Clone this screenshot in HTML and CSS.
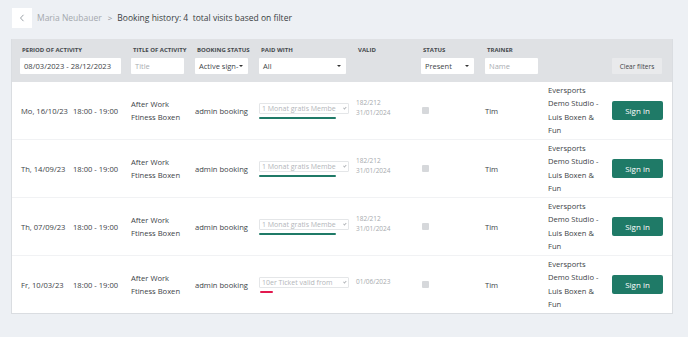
FILE: index.html
```html
<!DOCTYPE html>
<html lang="en">
<head>
    <meta charset="UTF-8">
    <title>Booking history</title>
    <link rel="stylesheet" href="styles.css">
</head>
<body>

    <div class="topbar">
        <a class="back-button" href="#">
            <svg width="6" height="8" viewBox="0 0 6 8"><path d="M4.5 0.8 L1.5 4 L4.5 7.2" fill="none" stroke="#9aa0a6" stroke-width="1"/></svg>
        </a>
        <span class="crumb">Maria Neubauer</span>
        <span class="crumb-sep">&gt;</span>
        <span class="crumb-current">Booking history: 4&nbsp; total visits based on filter</span>
    </div>

    <div class="history-card">
        <div class="filter-row">
            <div class="filter">
                <label>Period of activity</label>
                <div class="field field-period">08/03/2023 - 28/12/2023</div>
            </div>
            <div class="filter">
                <label>Title of activity</label>
                <div class="field placeholder">Title</div>
            </div>
            <div class="filter">
                <label>Booking status</label>
                <div class="field dropdown">Active sign-<span class="caret"></span></div>
            </div>
            <div class="filter">
                <label>Paid with</label>
                <div class="field dropdown">All<span class="caret"></span></div>
            </div>
            <div class="filter">
                <label>Valid</label>
            </div>
            <div class="filter">
                <label>Status</label>
                <div class="field dropdown">Present<span class="caret"></span></div>
            </div>
            <div class="filter">
                <label>Trainer</label>
                <div class="field placeholder">Name</div>
            </div>
            <div class="filter"></div>
            <div class="filter filter-action">
                <button type="button" class="clear-button">Clear filters</button>
            </div>
        </div>

        <div class="visit-row">
            <div class="when"><span class="day">Mo, 16/10/23</span><span>18:00 - 19:00</span></div>
            <div class="title">After Work<br>Ftiness Boxen</div>
            <div>admin booking</div>
            <div class="paid"><div class="paid-select">1 Monat gratis Membe<span class="chev"></span></div><div class="paid-bar bar-green"></div></div>
            <div class="valid">182/212<br>31/01/2024</div>
            <div><span class="check"></span></div>
            <div>Tim</div>
            <div class="studio">Eversports<br>Demo Studio -<br>Luis Boxen &amp;<br>Fun</div>
            <div><button type="button" class="signin-button">Sign in</button></div>
        </div>

        <div class="visit-row">
            <div class="when"><span class="day">Th, 14/09/23</span><span>18:00 - 19:00</span></div>
            <div class="title">After Work<br>Ftiness Boxen</div>
            <div>admin booking</div>
            <div class="paid"><div class="paid-select">1 Monat gratis Membe<span class="chev"></span></div><div class="paid-bar bar-green"></div></div>
            <div class="valid">182/212<br>31/01/2024</div>
            <div><span class="check"></span></div>
            <div>Tim</div>
            <div class="studio">Eversports<br>Demo Studio -<br>Luis Boxen &amp;<br>Fun</div>
            <div><button type="button" class="signin-button">Sign in</button></div>
        </div>

        <div class="visit-row">
            <div class="when"><span class="day">Th, 07/09/23</span><span>18:00 - 19:00</span></div>
            <div class="title">After Work<br>Ftiness Boxen</div>
            <div>admin booking</div>
            <div class="paid"><div class="paid-select">1 Monat gratis Membe<span class="chev"></span></div><div class="paid-bar bar-green"></div></div>
            <div class="valid">182/212<br>31/01/2024</div>
            <div><span class="check"></span></div>
            <div>Tim</div>
            <div class="studio">Eversports<br>Demo Studio -<br>Luis Boxen &amp;<br>Fun</div>
            <div><button type="button" class="signin-button">Sign in</button></div>
        </div>

        <div class="visit-row">
            <div class="when"><span class="day">Fr, 10/03/23</span><span>18:00 - 19:00</span></div>
            <div class="title">After Work<br>Ftiness Boxen</div>
            <div>admin booking</div>
            <div class="paid"><div class="paid-select">10er Ticket valid from<span class="chev"></span></div><div class="paid-bar bar-red"></div></div>
            <div class="valid">01/06/2023</div>
            <div><span class="check"></span></div>
            <div>Tim</div>
            <div class="studio">Eversports<br>Demo Studio -<br>Luis Boxen &amp;<br>Fun</div>
            <div><button type="button" class="signin-button">Sign in</button></div>
        </div>
    </div>

</body>
</html>
```

FILE: styles.css
```css
body {
    margin: 0;
    padding: 0;
    font-family: "Open Sans", Arial, sans-serif;
    background-color: #edf0f4;
    color: #404448;
}

.topbar {
    display: flex;
    align-items: center;
    height: 39px;
    padding-left: 12px;
    font-size: 8.5px;
}

.back-button {
    display: flex;
    align-items: center;
    justify-content: center;
    width: 20px;
    height: 20px;
    background-color: #ffffff;
    margin-right: 5px;
    margin-top: -4px;
}

.crumb {
    color: #a4a8ad;
    margin-top: -5px;
}

.crumb-sep {
    color: #8a8f94;
    margin: -5px 5px 0 6px;
    font-size: 8px;
}

.crumb-current {
    color: #3a3e42;
    margin-top: -5px;
}

.history-card {
    margin: 0 15px 0 11px;
    background-color: #ffffff;
    border: 1px solid #dadde1;
    border-top: none;
}

.filter-row,
.visit-row {
    display: grid;
    grid-template-columns: 111px 64px 64px 97px 65px 64px 63px 64px 1fr;
    padding: 0 10px 0 8px;
}

.filter-row {
    background-color: #dfe1e4;
    height: 43px;
    align-items: start;
}

.filter label {
    display: block;
    font-size: 6px;
    font-weight: bold;
    text-transform: uppercase;
    color: #45494d;
    margin-top: 7px;
    height: 12px;
    padding-left: 2px;
}

.field {
    position: relative;
    width: 53px;
    height: 16px;
    box-sizing: border-box;
    background-color: #ffffff;
    border-radius: 1px;
    font-size: 7.5px;
    line-height: 16px;
    padding-left: 4px;
    white-space: nowrap;
    overflow: hidden;
}

.field-period {
    width: 101px;
    font-size: 7.6px;
}

.placeholder {
    color: #a9adb1;
}

.dropdown {
    padding-right: 10px;
}

.filter:nth-child(4) .dropdown {
    width: 87px;
}

.caret {
    position: absolute;
    right: 5px;
    top: 7px;
    border-left: 2px solid transparent;
    border-right: 2px solid transparent;
    border-top: 2.5px solid #333;
}

.filter-action {
    display: flex;
    justify-content: flex-end;
}

.clear-button {
    margin-top: 19px;
    width: 50px;
    height: 16px;
    padding: 0;
    border: none;
    border-radius: 1px;
    background-color: #e9eaec;
    color: #3f4347;
    font-family: inherit;
    font-size: 6.5px;
}

.visit-row {
    height: 57px;
    align-items: center;
    border-top: 1px solid #f1f2f4;
    font-size: 7.6px;
}

.filter-row + .visit-row {
    border-top: none;
}

.when {
    display: flex;
    padding-left: 1px;
}

.day {
    width: 52px;
}

.title {
    line-height: 13px;
}

.paid {
    padding-top: 1px;
}

.paid-select {
    position: relative;
    width: 90px;
    height: 11px;
    box-sizing: border-box;
    border: 1px solid #e4e6e8;
    border-radius: 1px;
    font-size: 7px;
    line-height: 9px;
    color: #b3b6ba;
    padding-left: 2px;
    white-space: nowrap;
    overflow: hidden;
}

.chev {
    position: absolute;
    right: 2px;
    top: 2px;
    width: 2px;
    height: 2px;
    border-right: 1px solid #b3b6ba;
    border-bottom: 1px solid #b3b6ba;
    transform: rotate(45deg);
    background-color: #ffffff;
}

.chev::before {
    content: "";
    position: absolute;
    right: 1px;
    top: -3px;
    width: 6px;
    height: 8px;
    background-color: #ffffff;
    z-index: -1;
}

.paid-bar {
    height: 2px;
    margin-top: 3px;
    border-radius: 1px;
}

.bar-green {
    width: 77px;
    background-color: #1f7a67;
}

.bar-red {
    width: 13px;
    margin-left: 1px;
    background-color: #e2194f;
}

.valid {
    font-size: 6.5px;
    line-height: 10px;
    color: #a6aaae;
    margin-bottom: 5px;
}

.check {
    display: block;
    width: 7px;
    height: 7px;
    margin-left: 1px;
    background-color: #d6d8db;
    border-radius: 1px;
}

.studio {
    line-height: 13.5px;
}

.signin-button {
    width: 51px;
    height: 19px;
    padding: 0;
    border: none;
    border-radius: 2px;
    background-color: #1f7a67;
    color: #ffffff;
    font-family: inherit;
    font-size: 8px;
}
```
